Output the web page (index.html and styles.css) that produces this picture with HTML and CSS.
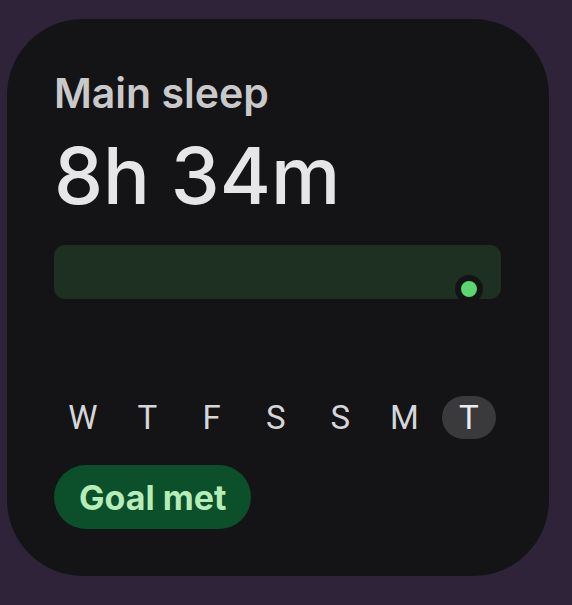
FILE: index.html
```html
<!doctype html>
<html lang="en">
  <head>
    <meta charset="UTF-8" />
    <meta name="viewport" content="width=device-width, initial-scale=1.0" />
    <title>Main sleep</title>
    <link rel="stylesheet" href="styles.css">
  </head>
  <body>
    <div class="card">
      <h1 class="title">Main sleep</h1>
      <div class="duration">8h 34m</div>

      <div class="bar">
        <span class="dot"></span>
      </div>

      <div class="days">
        <span class="day">W</span>
        <span class="day">T</span>
        <span class="day">F</span>
        <span class="day">S</span>
        <span class="day">S</span>
        <span class="day">M</span>
        <span class="day today">T</span>
      </div>

      <div class="goal">Goal met</div>
    </div>
  </body>
</html>
```

FILE: styles.css
```css
body {
  margin: 0;
  width: 572px;
  height: 605px;
  background: #2e2339;
  font-family: Inter, Roboto, "Liberation Sans", sans-serif;
  overflow: hidden;
}
.card {
  margin: 19px 0 0 7px;
  width: 542px;
  height: 557px;
  box-sizing: border-box;
  padding: 53px 0 0 47px;
  background: #141416;
  border-radius: 76px;
  display: flex;
  flex-direction: column;
  align-items: flex-start;
}
.title {
  margin: 0;
  font-size: 41px;
  line-height: 42px;
  font-weight: 600;
  color: #c9c9cc;
}
.duration {
  margin-top: 21px;
  font-size: 78px;
  line-height: 81px;
  font-weight: 500;
  color: #e6e6e8;
}
.bar {
  position: relative;
  margin-top: 29px;
  width: 447px;
  height: 54px;
  border-radius: 11px;
  background: #1e3022;
}
.dot {
  position: absolute;
  left: 401px;
  top: 30px;
  width: 16px;
  height: 16px;
  border: 6px solid #141416;
  border-radius: 50%;
  background: #5bd671;
}
.days {
  display: flex;
  gap: 10.3px;
  margin: 97px 0 0 2px;
}
.day {
  width: 54px;
  height: 43px;
  border-radius: 22px;
  display: flex;
  align-items: center;
  justify-content: center;
  font-family: Roboto, "Liberation Sans", sans-serif;
  font-size: 33px;
  color: #d6d6d9;
}
.today {
  background: #3a3a3d;
  color: #ececee;
}
.goal {
  margin-top: 26px;
  height: 64px;
  padding: 0 25px;
  border-radius: 32px;
  background: #0b4f2b;
  color: #b5ecb7;
  font-size: 34px;
  font-weight: 700;
  display: flex;
  align-items: center;
}
```
